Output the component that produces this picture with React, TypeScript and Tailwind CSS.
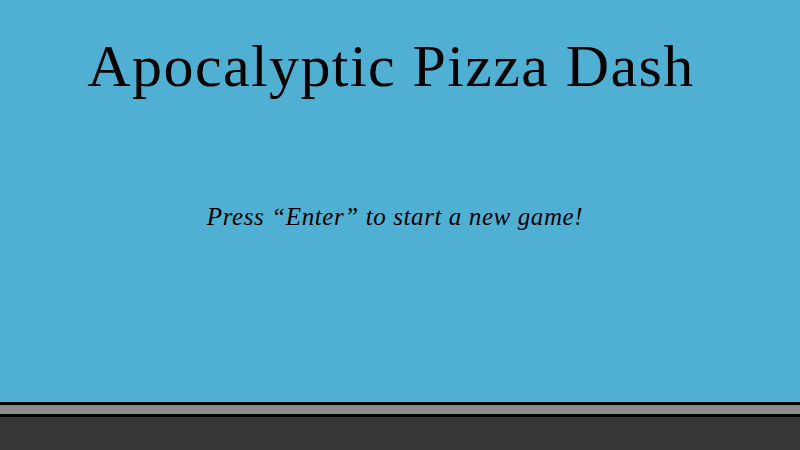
export default function App() {
  return (
    <div className="flex h-[450px] w-[800px] flex-col overflow-hidden bg-[#4fb0d3] font-['Liberation_Serif',serif] text-black">
      <div className="flex flex-1 flex-col items-center">
        <h1 className="mt-[26px] -ml-[18px] text-[60px] leading-[80px] tracking-[1.4px]">Apocalyptic Pizza Dash</h1>
        <p className="mt-[96px] -ml-[10px] text-[25px] italic leading-[30px] tracking-[0.6px]">
          Press “Enter” to start a new game!
        </p>
      </div>
      <div className="h-[15px] border-y-[3px] border-black bg-[#8c8c8c]" />
      <div className="h-[33px] bg-[#363636]" />
    </div>
  );
}
